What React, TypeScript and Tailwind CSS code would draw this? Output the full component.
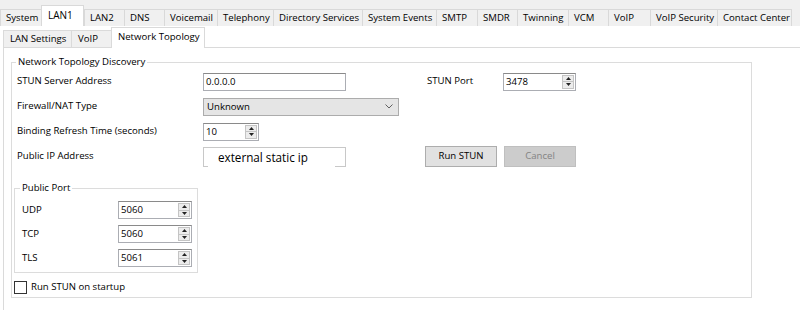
import React from "react";

const topTabs = [
  { label: "System", w: "w-[41px]" },
  { label: "LAN1", w: "w-[43px]", active: true },
  { label: "LAN2", w: "w-[40px]" },
  { label: "DNS", w: "w-[40px]" },
  { label: "Voicemail", w: "w-[53px]" },
  { label: "Telephony", w: "w-[56px]" },
  { label: "Directory Services", w: "w-[89px]" },
  { label: "System Events", w: "w-[74px]" },
  { label: "SMTP", w: "w-[41px]" },
  { label: "SMDR", w: "w-[40px]" },
  { label: "Twinning", w: "w-[51px]" },
  { label: "VCM", w: "w-[40px]" },
  { label: "VoIP", w: "w-[42px]" },
  { label: "VoIP Security", w: "w-[67px]" },
  { label: "Contact Center", w: "w-[75px]" },
];

const subTabs = [
  { label: "LAN Settings", w: "w-[68px]" },
  { label: "VoIP", w: "w-[40px]" },
  { label: "Network Topology", w: "w-[94px]", active: true },
];

const Arrow = ({ up }: { up?: boolean }) => (
  <svg width="5" height="3" viewBox="0 0 5 3">
    <polygon points={up ? "0,3 5,3 2.5,0" : "0,0 5,0 2.5,3"} fill="#222" />
  </svg>
);

const Spin = ({ value, w }: { value: string; w: string }) => (
  <div className={`flex h-[18px] border border-[#abadb3] border-t-[#8a8a8a] bg-white ${w}`}>
    <span className="flex-1 pl-[2px] leading-[15px]">{value}</span>
    <div className="flex flex-col w-[12px] my-[1px] mr-[1px]">
      <div className="flex-1 flex items-center justify-center border border-[#c4c4c4] bg-[#ececec]">
        <Arrow up />
      </div>
      <div className="flex-1 flex items-center justify-center border border-t-0 border-[#c4c4c4] bg-[#ececec]">
        <Arrow />
      </div>
    </div>
  </div>
);

const Row = ({ label, children }: { label: string; children: React.ReactNode }) => (
  <div className="flex h-[25px] items-center pl-[3px]">
    <span className="w-[186px]">{label}</span>
    {children}
  </div>
);

const PortRow = ({ label, value }: { label: string; value: string }) => (
  <div className="flex h-[24px] items-center">
    <span className="w-[96px]">{label}</span>
    <Spin value={value} w="w-[74px]" />
  </div>
);

const App = () => {
  return (
    <div className="w-[800px] h-[310px] overflow-hidden bg-[#f0f0f0] pt-[5px] text-[9.6px] text-black font-['Open_Sans','Noto_Sans',sans-serif]">
      <div className="flex items-end h-[21px]">
        {topTabs.map((t) =>
          t.active ? (
            <div
              key={t.label}
              className={`${t.w} h-[21px] bg-white border-x border-t border-[#d9d9d9] pl-[6px] pt-[3px] leading-[12px] text-[10px]`}
            >
              {t.label}
            </div>
          ) : (
            <div
              key={t.label}
              className={`${t.w} h-[17px] border-l border-t border-[#d9d9d9] last:border-r pl-[5px] leading-[16px]`}
            >
              {t.label}
            </div>
          )
        )}
      </div>
      <div className="bg-white h-[284px]">
        <div className="flex items-end h-[21px] pl-[3px]">
          {subTabs.map((t) =>
            t.active ? (
              <div
                key={t.label}
                className={`${t.w} relative z-10 -mb-px h-[21px] bg-white border-x border-t border-[#dadada] pl-[6px] pt-[2px] leading-[14px]`}
              >
                {t.label}
              </div>
            ) : (
              <div
                key={t.label}
                className={`${t.w} h-[17px] bg-[#f0f0f0] border-l border-t border-[#dadada] pl-[6px] leading-[16px]`}
              >
                {t.label}
              </div>
            )
          )}
        </div>
        <div className="ml-[3px] h-full border-l border-t border-[#dadada] pl-[7px] pt-[7px]">
          <fieldset className="w-[741px] border border-[#dcdcdc] pl-[2px] pb-[3px]">
            <legend className="ml-[2px] px-[2px] leading-[14px]">Network Topology Discovery</legend>

            <Row label="STUN Server Address">
              <div className="w-[143px] h-[18px] border border-[#abadb3] border-t-[#8a8a8a] pl-[2px] leading-[15px]">
                0.0.0.0
              </div>
              <span className="ml-[81px] w-[76px]">STUN Port</span>
              <Spin value="3478" w="w-[73px]" />
            </Row>

            <Row label="Firewall/NAT Type">
              <div className="flex items-center justify-between w-[196px] h-[18px] border border-[#acacac] bg-[#e5e5e5] pl-[3px] pr-[5px]">
                <span className="leading-[15px]">Unknown</span>
                <svg width="8" height="5" viewBox="0 0 8 5">
                  <polyline points="0.5,0.5 4,4 7.5,0.5" fill="none" stroke="#606060" strokeWidth="1" />
                </svg>
              </div>
            </Row>

            <Row label="Binding Refresh Time (seconds)">
              <Spin value="10" w="w-[56px]" />
            </Row>

            <Row label="Public IP Address">
              <div className="flex flex-col w-[143px] h-[20px]">
                <div className="flex-1 border-x border-t border-[#c8c8c8] pl-[14px] text-[11.7px] leading-[18px]">
                  external static ip
                </div>
                <div className="flex justify-between">
                  <div className="w-[5px] h-px bg-[#c8c8c8]" />
                  <div className="w-[11px] h-px bg-[#c8c8c8]" />
                </div>
              </div>
              <button className="ml-[79px] w-[72px] h-[21px] border border-[#adadad] bg-[#e1e1e1]">
                Run STUN
              </button>
              <button className="ml-[7px] w-[72px] h-[21px] border border-[#bfbfbf] bg-[#cccccc] text-[#838383]">
                Cancel
              </button>
            </Row>

            <fieldset className="mt-[12px] w-[184px] border border-[#dcdcdc] pl-[7px] pt-[3px] pb-[2px]">
              <legend className="-ml-[2px] px-[2px] leading-[14px]">Public Port</legend>
              <PortRow label="UDP" value="5060" />
              <PortRow label="TCP" value="5060" />
              <PortRow label="TLS" value="5061" />
            </fieldset>

            <div className="mt-[7px] flex h-[14px] items-center gap-[4px]">
              <div className="w-[13px] h-[13px] border border-[#333333] bg-white" />
              <span>Run STUN on startup</span>
            </div>
          </fieldset>
        </div>
      </div>
    </div>
  );
};

export default App;
